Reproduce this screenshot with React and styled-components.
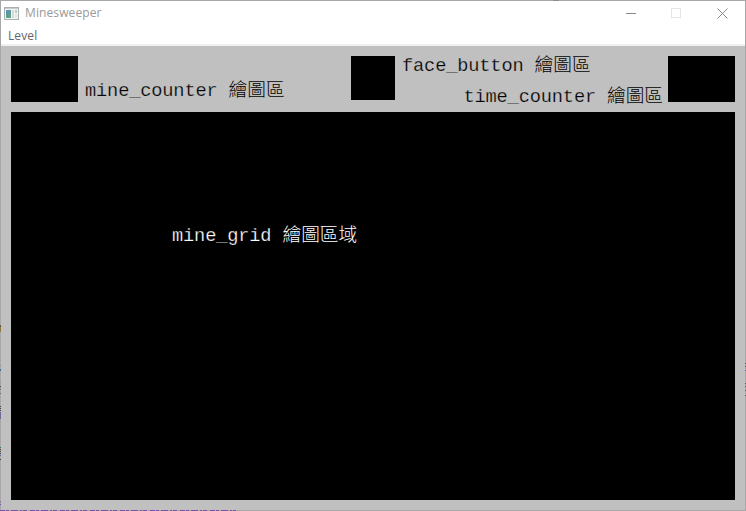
import React from "react";
import styled, { createGlobalStyle } from "styled-components";

const GlobalStyle = createGlobalStyle`
  * { box-sizing: border-box; }
  body { margin: 0; background: #a8a8a8; overflow: hidden; }
`;

const Window = styled.main`
  position: relative;
  display: flex;
  flex-direction: column;
  width: 746px;
  height: 511px;
  border: 1px solid #a8a8a8;
  background: #c0c0c0;
  font-family: "Noto Sans", sans-serif;
`;

const TitleBar = styled.header`
  display: flex;
  align-items: center;
  height: 25px;
  padding: 0 0 1px 3px;
  background: #fff;
  color: #999;
`;

const Title = styled.h1`
  flex: 1;
  margin: 0 0 0 6px;
  font: 400 12px/24px "Open Sans", sans-serif;
  letter-spacing: 0.1px;
`;

const WindowButton = styled.button`
  display: grid;
  place-items: center;
  width: 45.5px;
  height: 24px;
  padding: 0;
  border: 0;
  background: none;
  color: ${(p) => (p.$disabled ? "#e6e6e6" : "#8a8a8a")};
`;

const MenuBar = styled.nav`
  height: 20px;
  padding: 1px 0 0 7px;
  border-bottom: 2px solid #f0f0f0;
  background: #fff;
`;

const MenuItem = styled.span`
  display: block;
  color: #666;
  font: 400 12px/17px "Open Sans", sans-serif;
  letter-spacing: 0.1px;
`;

const Client = styled.section`
  display: flex;
  flex-direction: column;
  gap: 10px;
  flex: 1;
  padding: 10px;
`;

const StatusRow = styled.div`
  display: grid;
  grid-template-columns: 67px 273px 44px 273px 67px;
  height: 46px;
`;

const Canvas = styled.div`
  height: ${(p) => p.$height}px;
  background: #000;
`;

const Labels = styled.div`
  display: flex;
  flex-direction: column;
  height: 46px;
  justify-content: ${(p) => (p.$low ? "flex-end" : "flex-start")};
  padding: ${(p) => p.$pad};
`;

const Label = styled.span`
  flex: none;
  height: 22px;
  align-self: ${(p) => (p.$end ? "flex-end" : "flex-start")};
  color: ${(p) => (p.$light ? "#fff" : "#000")};
  font: 400 18.67px/22px "Liberation Mono", "Noto Sans CJK TC", monospace;
  letter-spacing: -0.15px;
  white-space: pre;
  -webkit-text-stroke: 0.25px ${(p) => (p.$light ? "#000" : "#c0c0c0")};
`;

const FaceLabel = styled(Label)`
  margin-top: -1px;
`;

const TimeLabel = styled(Label)`
  margin-top: 9px;
`;

const Cjk = styled.span`
  font-family: "Noto Sans CJK TC", sans-serif;
  font-weight: 300;
  line-height: 0;
  letter-spacing: 0;
  -webkit-text-stroke: 0;
`;

const MineGrid = styled.div`
  display: flex;
  height: 388px;
  padding: 113px 0 0 161px;
  background: #000;
`;

const Fringe = styled.svg`
  position: absolute;
  left: -1px;
  top: -1px;
  pointer-events: none;
`;

function AppIcon() {
  return (
    <svg width="15" height="13" viewBox="0 0 15 13" shapeRendering="crispEdges">
      <defs>
        <linearGradient id="screen" x1="0" y1="0" x2="0.6" y2="1">
          <stop offset="0" stopColor="#5b8fbd" />
          <stop offset="1" stopColor="#5aa77c" />
        </linearGradient>
      </defs>
      <path d="M.5 .5h14v12H.5z" fill="#f4f4f4" stroke="#a9b0b0" />
      <path d="M1 1h13v1H1z" fill="#c5cccc" />
      <path d="M2 3h5v8H2z" fill="url(#screen)" />
      <path d="M8 3h2v8H8z" fill="#d3dada" />
      <path d="M11 3h2v3h-2z" fill="#b9cdc7" />
      <path d="M11 7h2v4h-2z" fill="#e0e3e3" />
    </svg>
  );
}

function CaptionGlyph({ path, smooth }) {
  return (
    <svg width="11" height="11" viewBox="0 0 11 11" fill="none" stroke="currentColor" shapeRendering={smooth ? "auto" : "crispEdges"}>
      <path d={path} />
    </svg>
  );
}

const fringeMarks = [
  [0, 325, 2, "#5c5648"], [0, 327, 5, "#927744"], [0, 365, 1, "#7198ad"],
  [0, 369, 2, "#456d9b"], [0, 382, 1, "#7899b1"], [0, 386, 1, "#454545"],
  [0, 388, 2, "#8b8295"], [0, 393, 1, "#80674c"], [0, 406, 1, "#444"],
  [0, 408, 1, "#444"], [0, 410, 1, "#444"], [0, 412, 7, "#77659b"],
  [0, 447, 1, "#347070"], [0, 449, 1, "#444"], [0, 451, 1, "#444"],
  [0, 453, 1, "#444"], [0, 455, 1, "#4870a0"], [0, 459, 1, "#444"],
  [0, 501, 2, "#9c7ba8"], [0, 504, 1, "#7551a4"],
  [745, 363, 1, "#555"], [745, 366, 1, "#555"], [745, 370, 1, "#666096"],
  [745, 383, 1, "#555"], [745, 386, 1, "#555"], [745, 390, 1, "#555"], [745, 395, 1, "#555"],
];

export default function App() {
  return (
    <>
      <GlobalStyle />
      <Window>
        <TitleBar>
          <AppIcon />
          <Title>Minesweeper</Title>
          <WindowButton aria-label="Minimize"><CaptionGlyph path="M0 5.5h10" /></WindowButton>
          <WindowButton aria-label="Maximize" $disabled><CaptionGlyph path="M.5 .5h9v9h-9z" /></WindowButton>
          <WindowButton aria-label="Close"><CaptionGlyph smooth path="M.5 .5l10 10M10.5 .5l-10 10" /></WindowButton>
        </TitleBar>
        <MenuBar><MenuItem>Level</MenuItem></MenuBar>
        <Client>
          <StatusRow>
            <Canvas $height={46} />
            <Labels $low $pad="0 0 0 7px">
              <Label>mine_counter <Cjk>繪圖區</Cjk></Label>
            </Labels>
            <Canvas $height={44} />
            <Labels $pad="0 5px 0 7px">
              <FaceLabel>face_button <Cjk>繪圖區</Cjk></FaceLabel>
              <TimeLabel $end>time_counter <Cjk>繪圖區</Cjk></TimeLabel>
            </Labels>
            <Canvas $height={46} />
          </StatusRow>
          <MineGrid>
            <Label $light>mine_grid <Cjk>繪圖區域</Cjk></Label>
          </MineGrid>
        </Client>
        <Fringe width="746" height="511" shapeRendering="crispEdges">
          {fringeMarks.map(([x, y, h, color]) => (
            <path key={`${x}-${y}`} d={`M${x} ${y}h1v${h}h-1z`} fill={color} />
          ))}
          <path d="M553 .5h6" stroke="#8c8c8c" />
          <path d="M0 510.5h236" stroke="#7650aa" strokeDasharray="5 1 3 2 7 2 2 1 4 3" />
        </Fringe>
      </Window>
    </>
  );
}
